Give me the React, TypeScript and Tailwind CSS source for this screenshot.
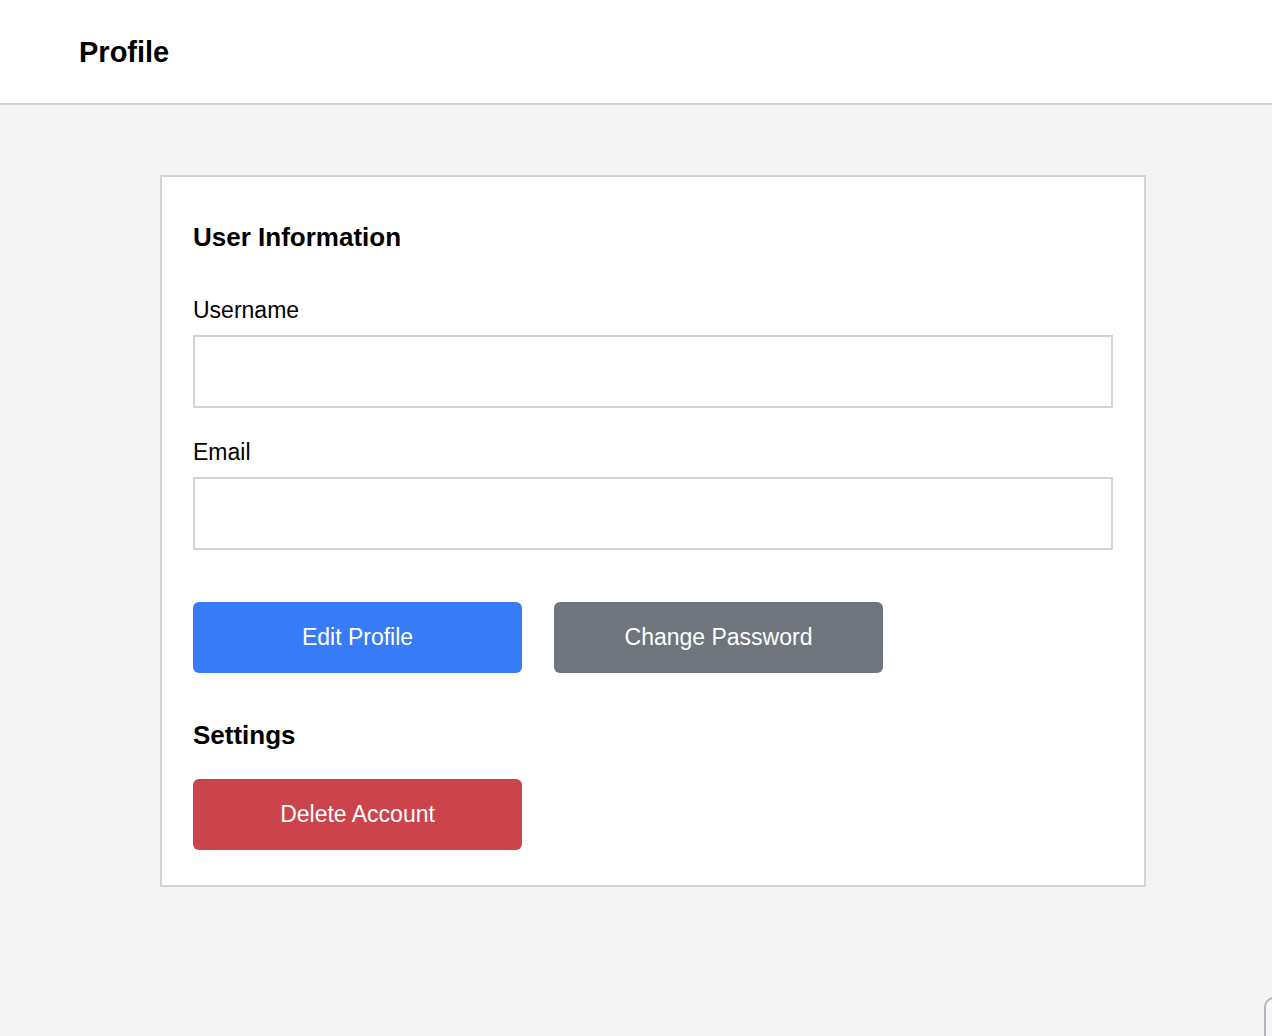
import React from "react";

function Field({ label, type }: { label: string; type: string }) {
    return (
        <div className="flex flex-col">
            <label className="text-[23px] leading-[28px] text-black mb-[11px]">{label}</label>
            <input
                type={type}
                className="h-[73px] w-full border-2 border-[#d4d4d4] bg-white px-3 text-[20px] outline-none"
            />
        </div>
    );
}

export default function App() {
    return (
        <div className="min-h-screen bg-[#f4f4f4] font-['Liberation_Sans',Arial,sans-serif] text-black">
            {/* Header */}
            <header className="h-[105px] bg-white border-b-2 border-[#d3d3d3] flex items-center px-[79px]">
                <h1 className="text-[29px] font-bold leading-none pt-[2px]">Profile</h1>
            </header>

            {/* Card */}
            <div className="ml-[160px] mt-[70px] w-[986px] bg-white border-2 border-[#d3d3d3] pt-[45px] px-[31px] pb-[35px]">
                <h2 className="text-[26px] leading-[30px] font-bold">User Information</h2>

                <div className="mt-[44px] flex flex-col gap-[30px]">
                    <Field label="Username" type="text" />
                    <Field label="Email" type="email" />
                </div>

                <div className="mt-[52px] flex gap-[32px]">
                    <button className="h-[71px] w-[329px] rounded-[6px] bg-[#387bf6] text-white text-[23px]">
                        Edit Profile
                    </button>
                    <button className="h-[71px] w-[329px] rounded-[6px] bg-[#6f757d] text-white text-[23px]">
                        Change Password
                    </button>
                </div>

                <h2 className="mt-[47px] text-[26px] leading-[30px] font-bold">Settings</h2>

                <button className="mt-[29px] h-[71px] w-[329px] rounded-[6px] bg-[#cc444b] text-white text-[23px]">
                    Delete Account
                </button>
            </div>

            {/* partially visible floating widget at bottom right */}
            <div className="fixed left-[1264px] top-[997px] w-[40px] h-[60px] rounded-tl-[10px] border-2 border-[#b4b4c2] bg-[#f6f6f6]" />
        </div>
    );
}
